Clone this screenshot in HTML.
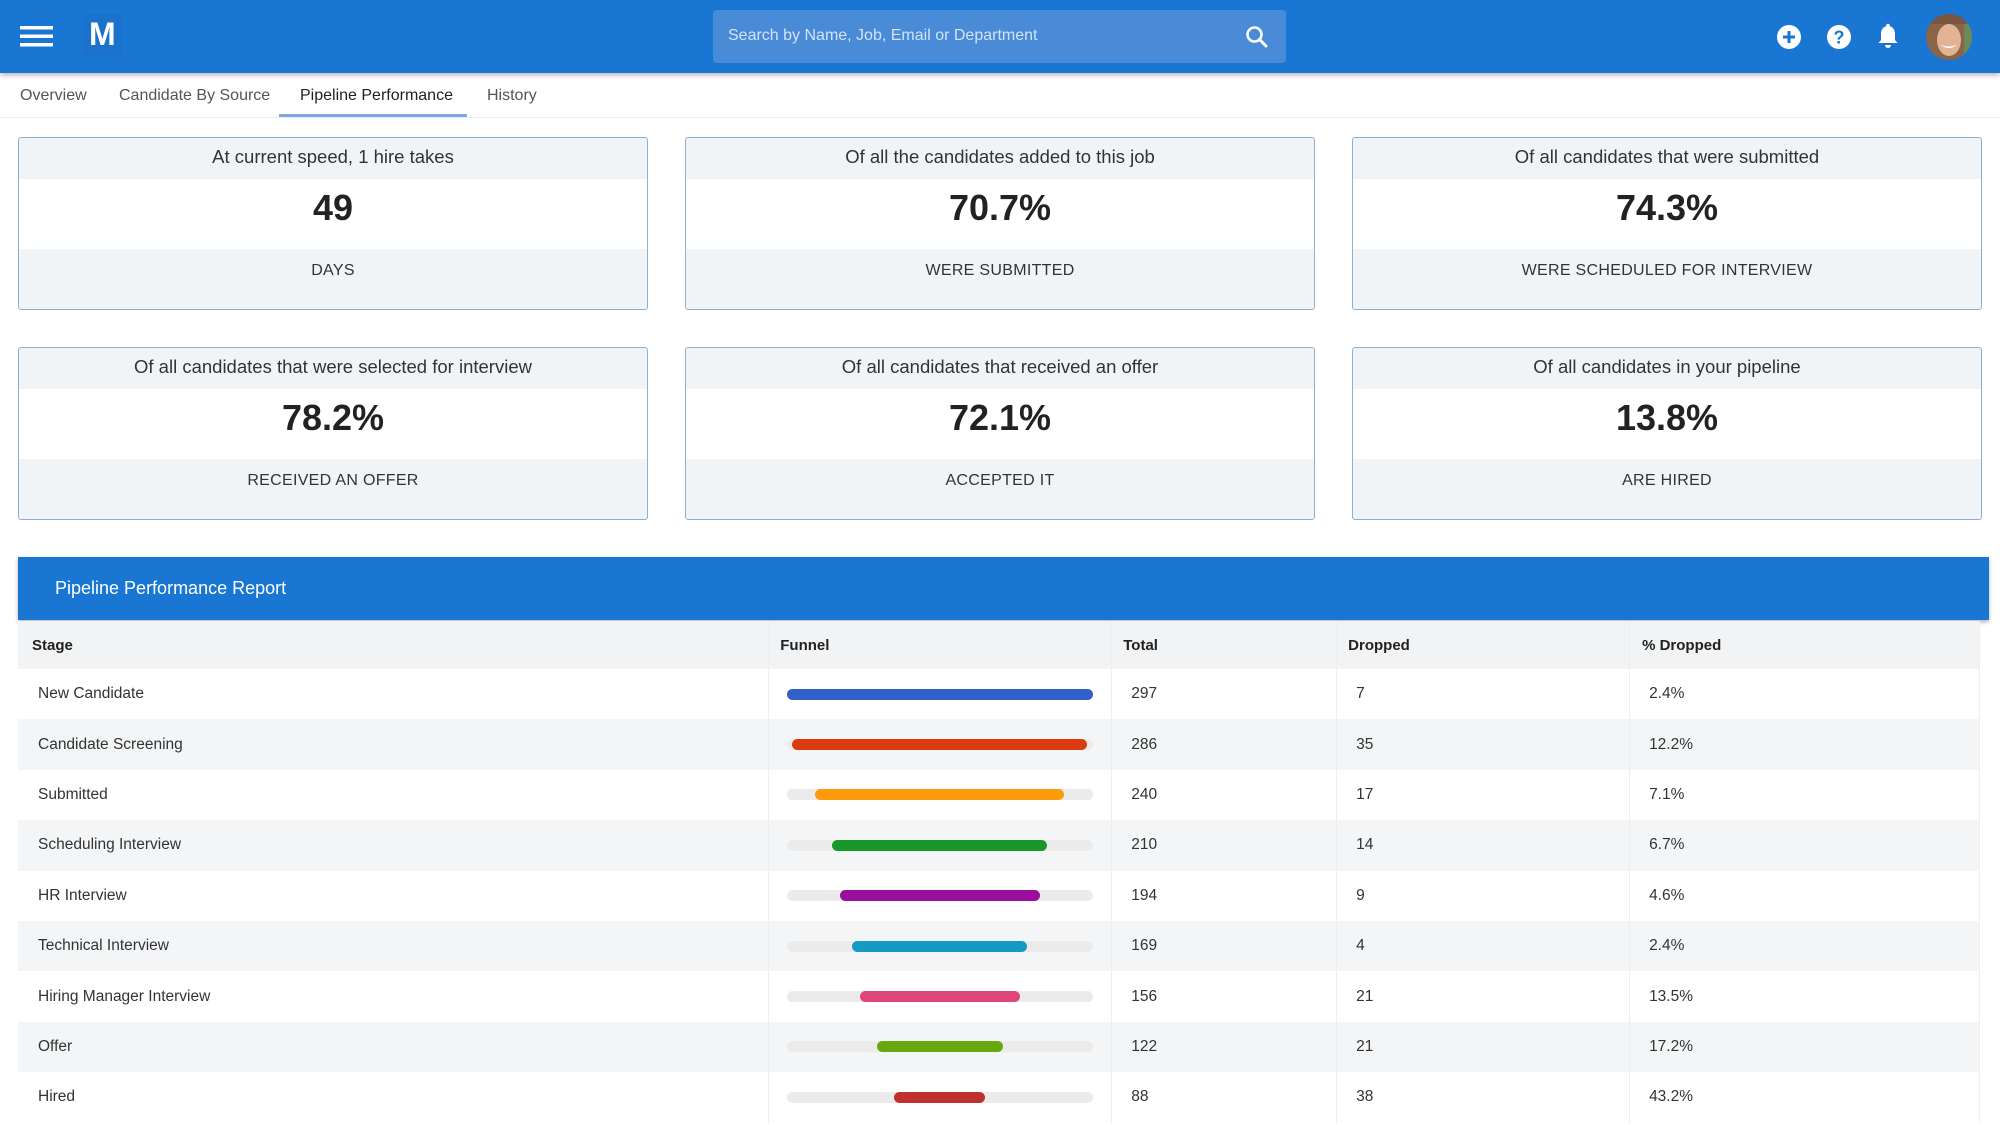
<!DOCTYPE html>
<html><head><meta charset="utf-8"><style>
*{margin:0;padding:0;box-sizing:border-box}
body{width:2000px;height:1125px;overflow:hidden;background:#fff;font-family:"Liberation Sans",sans-serif;color:#222;position:relative}
.abs{position:absolute}
.hdr{left:0;top:0;width:2000px;height:73px;background:#1976d2;box-shadow:0 2px 5px rgba(0,0,0,.3);z-index:2}
.search{left:713px;top:10px;width:573px;height:53px;background:#4a8bd8;border-radius:4px}
.search span{position:absolute;left:15px;top:17px;font-size:16px;color:#d3e3f6}
.tab{top:87px;font-size:16px;color:#555}
.card{border:1.5px solid #8db0d8;border-radius:3px;width:630px;height:173px;background:#f1f4f7;overflow:hidden}
.card .t{height:41px;line-height:38px;text-align:center;font-size:18.5px;color:#333}
.card .n{height:70px;background:#fff;text-align:center;line-height:58px;font-size:36px;font-weight:bold;color:#222}
.card .l{text-align:center;font-size:16px;color:#333;line-height:44px;letter-spacing:.3px}
.rep{left:18px;top:557px;width:1971px;height:63px;background:#1976d2;box-shadow:0 2px 4px rgba(0,0,0,.3)}
.rep span{position:absolute;left:37px;top:21px;color:#fff;font-size:18px}
table{position:absolute;left:18px;top:621px;width:1962px;border-collapse:collapse;font-size:15.5px;color:#333}
td,th{height:50.4px;border-right:1px solid #eceef0;text-align:left;font-weight:normal}
th{height:48px;font-weight:bold;color:#222;font-size:15px}
tr:nth-child(odd){background:#f3f5f7}
tr.h{background:#f1f3f5}
.track{position:relative;width:306px;height:11px;border-radius:6px;background:#ebebeb;margin-left:18px}
.bar{position:absolute;top:0;height:11px;border-radius:6px}
</style></head><body>
<div class="abs hdr">
 <svg class="abs" style="left:20px;top:26px" width="33" height="21"><rect y="0" width="33" height="3.5" fill="#fff"/><rect y="8.5" width="33" height="3.5" fill="#fff"/><rect y="17" width="33" height="3.5" fill="#fff"/></svg>
 <div class="abs" style="left:84px;top:14px;width:38px;height:42px;background:#1a72cc"></div>
 <div class="abs" style="left:89px;top:16px;color:#fff;font-weight:bold;font-size:32px">M</div>
 <div class="abs search"><span>Search by Name, Job, Email or Department</span>
  <svg class="abs" style="left:532px;top:15px" width="24" height="24"><circle cx="9.5" cy="9.5" r="7" fill="none" stroke="#fff" stroke-width="2.6"/><line x1="14.5" y1="14.5" x2="21" y2="21" stroke="#fff" stroke-width="3" stroke-linecap="round"/></svg></div>
 <svg class="abs" style="left:1776px;top:24px" width="26" height="26"><circle cx="13" cy="13" r="12" fill="#fff"/><path d="M13 7v12M7 13h12" stroke="#1976d2" stroke-width="3"/></svg>
 <svg class="abs" style="left:1826px;top:24px" width="26" height="26"><circle cx="13" cy="13" r="12" fill="#fff"/><text x="13" y="19.5" text-anchor="middle" font-family="Liberation Sans" font-weight="bold" font-size="18" fill="#1976d2">?</text></svg>
 <svg class="abs" style="left:1876px;top:23px" width="24" height="28"><path d="M12 3c-5 0-7 4-7 8v6l-2.5 3h19L19 17v-6c0-4-2-8-7-8z" fill="#fff"/><circle cx="12" cy="2.5" r="1.8" fill="#fff"/><path d="M9 22a3 3 0 0 0 6 0z" fill="#fff"/></svg>
 <svg class="abs" style="left:1926px;top:14px" width="46" height="46"><defs><clipPath id="c"><circle cx="23" cy="23" r="23"/></clipPath></defs><g clip-path="url(#c)"><rect width="46" height="46" fill="#8a6448"/><rect x="38" width="8" height="46" fill="#6a8a5a"/><ellipse cx="23" cy="26" rx="12" ry="16" fill="#e2b395"/><path d="M15 31q8 6 16 0q-8 3-16 0z" fill="#fff"/><rect x="5" y="0" width="36" height="10" fill="#7a5540"/></g></svg>
</div>
<div class="abs tab" style="left:20px">Overview</div>
<div class="abs tab" style="left:119px">Candidate By Source</div>
<div class="abs tab" style="left:300px;color:#222">Pipeline Performance</div>
<div class="abs tab" style="left:487px">History</div>
<div class="abs" style="left:279px;top:114px;width:188px;height:3px;background:#7ea6e0"></div>
<div class="abs" style="left:0;top:117px;width:2000px;height:1px;background:#ececec"></div>

<div class="abs card" style="left:18px;top:137px"><div class="t">At current speed, 1 hire takes</div><div class="n">49</div><div class="l">DAYS</div></div>
<div class="abs card" style="left:685px;top:137px"><div class="t">Of all the candidates added to this job</div><div class="n">70.7%</div><div class="l">WERE SUBMITTED</div></div>
<div class="abs card" style="left:1352px;top:137px"><div class="t">Of all candidates that were submitted</div><div class="n">74.3%</div><div class="l">WERE SCHEDULED FOR INTERVIEW</div></div>
<div class="abs card" style="left:18px;top:347px"><div class="t">Of all candidates that were selected for interview</div><div class="n">78.2%</div><div class="l">RECEIVED AN OFFER</div></div>
<div class="abs card" style="left:685px;top:347px"><div class="t">Of all candidates that received an offer</div><div class="n">72.1%</div><div class="l">ACCEPTED IT</div></div>
<div class="abs card" style="left:1352px;top:347px"><div class="t">Of all candidates in your pipeline</div><div class="n">13.8%</div><div class="l">ARE HIRED</div></div>

<div class="abs rep"><span>Pipeline Performance Report</span></div>
<table>
<colgroup><col style="width:751px"><col style="width:343px"><col style="width:225px"><col style="width:293px"><col style="width:350px"></colgroup>
<tr class="h"><th style="padding-left:14px">Stage</th><th style="padding-left:11px">Funnel</th><th style="padding-left:11px">Total</th><th style="padding-left:11px">Dropped</th><th style="padding-left:12px">% Dropped</th></tr>
<tr><td style="padding-left:20px">New Candidate</td><td><div class="track"><div class="bar" style="left:0;width:306px;background:#3060c8"></div></div></td><td style="padding-left:19px">297</td><td style="padding-left:19px">7</td><td style="padding-left:19px">2.4%</td></tr>
<tr><td style="padding-left:20px">Candidate Screening</td><td><div class="track"><div class="bar" style="left:5px;width:295px;background:#dc3b12"></div></div></td><td style="padding-left:19px">286</td><td style="padding-left:19px">35</td><td style="padding-left:19px">12.2%</td></tr>
<tr><td style="padding-left:20px">Submitted</td><td><div class="track"><div class="bar" style="left:28px;width:249px;background:#fb9a0a"></div></div></td><td style="padding-left:19px">240</td><td style="padding-left:19px">17</td><td style="padding-left:19px">7.1%</td></tr>
<tr><td style="padding-left:20px">Scheduling Interview</td><td><div class="track"><div class="bar" style="left:45px;width:215px;background:#17992a"></div></div></td><td style="padding-left:19px">210</td><td style="padding-left:19px">14</td><td style="padding-left:19px">6.7%</td></tr>
<tr><td style="padding-left:20px">HR Interview</td><td><div class="track"><div class="bar" style="left:53px;width:200px;background:#9a0f9e"></div></div></td><td style="padding-left:19px">194</td><td style="padding-left:19px">9</td><td style="padding-left:19px">4.6%</td></tr>
<tr><td style="padding-left:20px">Technical Interview</td><td><div class="track"><div class="bar" style="left:65px;width:175px;background:#159ac6"></div></div></td><td style="padding-left:19px">169</td><td style="padding-left:19px">4</td><td style="padding-left:19px">2.4%</td></tr>
<tr><td style="padding-left:20px">Hiring Manager Interview</td><td><div class="track"><div class="bar" style="left:73px;width:160px;background:#e0457a"></div></div></td><td style="padding-left:19px">156</td><td style="padding-left:19px">21</td><td style="padding-left:19px">13.5%</td></tr>
<tr><td style="padding-left:20px">Offer</td><td><div class="track"><div class="bar" style="left:90px;width:126px;background:#66a80d"></div></div></td><td style="padding-left:19px">122</td><td style="padding-left:19px">21</td><td style="padding-left:19px">17.2%</td></tr>
<tr><td style="padding-left:20px">Hired</td><td><div class="track"><div class="bar" style="left:107px;width:91px;background:#c0302d"></div></div></td><td style="padding-left:19px">88</td><td style="padding-left:19px">38</td><td style="padding-left:19px">43.2%</td></tr>
</table>
</body></html>
